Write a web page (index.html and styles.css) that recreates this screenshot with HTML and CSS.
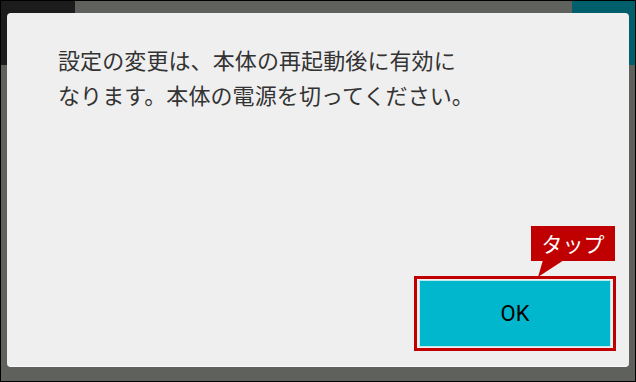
FILE: index.html
```html
<!DOCTYPE html>
<html lang="ja">
<head>
  <meta charset="UTF-8">
  <title>設定の変更</title>
  <link rel="stylesheet" href="styles.css">
</head>
<body>

  <div class="screen">
    <div class="dialog">
      <p class="message">設定の変更は、本体の再起動後に有効に<br>なります。本体の電源を切ってください。</p>

      <div class="footer">
        <div class="tap-frame">
          <div class="callout">タップ</div>
          <svg class="callout-tail" width="28" height="17" viewBox="0 0 28 17">
            <polygon points="5,0 26,0 0,17" fill="#c00000"/>
          </svg>
          <button class="btn-ok">OK</button>
        </div>
      </div>
    </div>
  </div>

</body>
</html>
```

FILE: styles.css
```css
body {
  margin: 0;
  font-family: "Noto Sans CJK JP", "Noto Sans", sans-serif;
}

.screen {
  width: 636px;
  height: 382px;
  box-sizing: border-box;
  border: 1px solid #000;
  padding: 12px 6px 14px 6px;
  background:
    linear-gradient(#1c1c1c, #1c1c1c) 0 0 / 74px 64px no-repeat,
    linear-gradient(#005f6a, #005f6a) 100% 0 / 63px 64px no-repeat,
    #5f615d;
}

.dialog {
  height: 100%;
  box-sizing: border-box;
  background-color: #efefef;
  border-radius: 4px;
  border-bottom: 1px solid #fbfbfb;
  display: flex;
  flex-direction: column;
}

.message {
  margin: 0;
  padding: 29px 0 0 51px;
  font-size: 22px;
  line-height: 35px;
  letter-spacing: 0.1px;
  color: #333;
}

.footer {
  margin-top: auto;
  display: flex;
  justify-content: flex-end;
  padding: 0 13px 15px 0;
}

.tap-frame {
  position: relative;
  border: 3px solid #c00000;
  padding: 1px 2px;
}

.btn-ok {
  display: block;
  width: 192px;
  height: 67px;
  border: 1px solid #bfe8ef;
  background-color: #00b7cd;
  color: #000;
  font-family: Roboto, "Noto Sans", sans-serif;
  font-size: 22px;
  cursor: pointer;
}

.callout {
  position: absolute;
  right: -2px;
  top: -53px;
  width: 84px;
  height: 35px;
  background-color: #c00000;
  color: #fff;
  font-size: 21px;
  line-height: 35px;
  text-align: center;
}

.callout-tail {
  position: absolute;
  left: 121px;
  top: -19px;
  display: block;
}
```
